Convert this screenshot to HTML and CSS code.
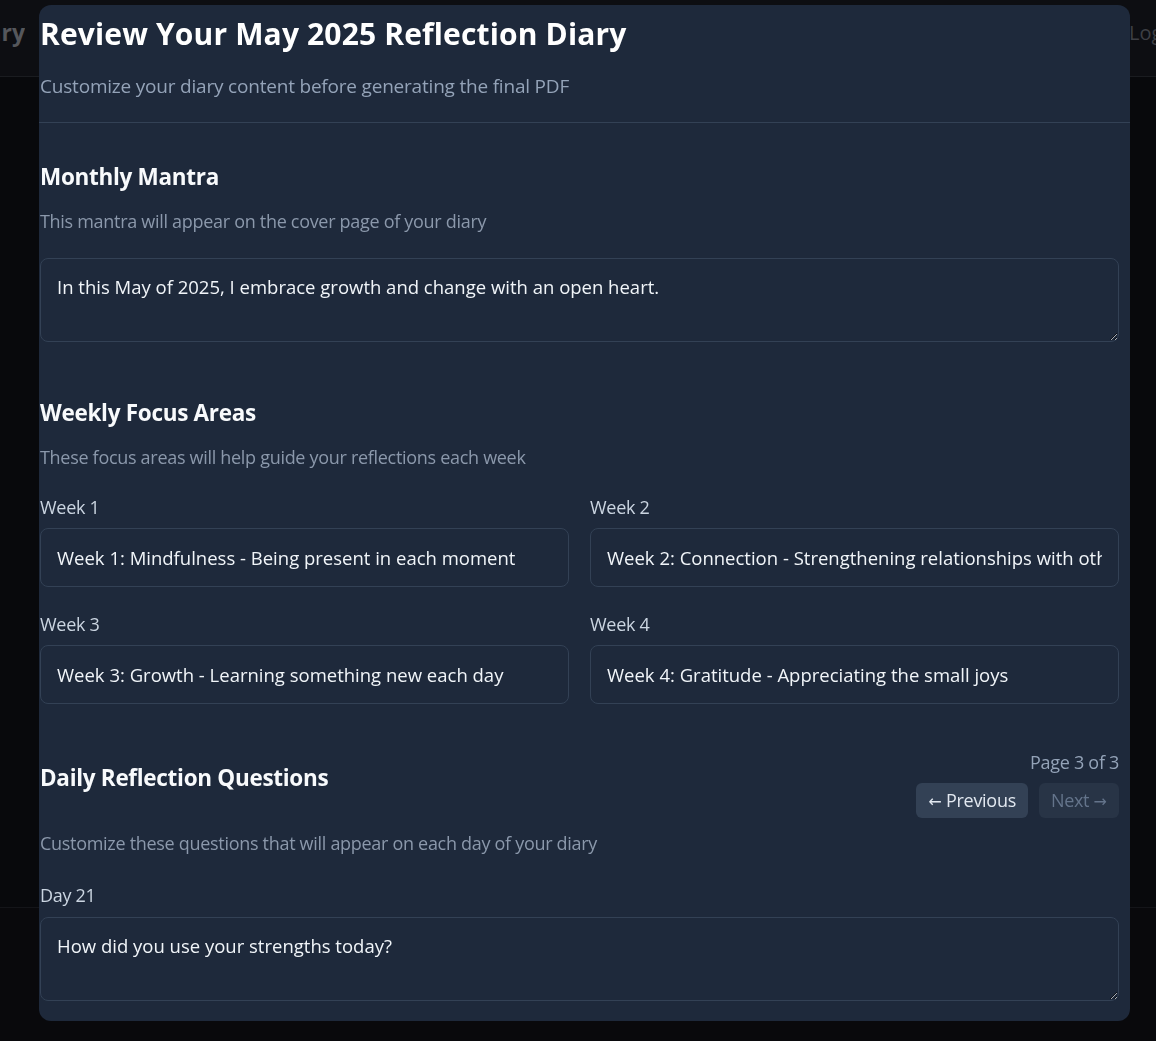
FILE: index.html
```html
<!DOCTYPE html>
<html lang="en">
<head>
<meta charset="utf-8">
<title>Review Your May 2025 Reflection Diary</title>
<link rel="stylesheet" href="styles.css">
</head>
<body>
<div class="page">
  <header class="topbar">
    <div class="brand"><span>Reflection Diary</span></div>
    <div class="logout">Logout</div>
  </header>
  <main class="main"></main>
  <footer class="footer"></footer>
</div>

<div class="overlay">
  <div class="modal">
    <div class="modal-head">
      <h1 class="title">Review Your May 2025 Reflection Diary</h1>
      <p class="subtitle">Customize your diary content before generating the final PDF</p>
    </div>
    <div class="modal-body">
      <section class="section">
        <h2 class="section-title">Monthly Mantra</h2>
        <p class="section-desc">This mantra will appear on the cover page of your diary</p>
        <textarea class="field area" rows="2">In this May of 2025, I embrace growth and change with an open heart.</textarea>
      </section>

      <section class="section section-weekly">
        <h2 class="section-title">Weekly Focus Areas</h2>
        <p class="section-desc">These focus areas will help guide your reflections each week</p>
        <div class="week-grid">
          <label class="item">
            <span class="label">Week 1</span>
            <input class="field line" type="text" value="Week 1: Mindfulness - Being present in each moment">
          </label>
          <label class="item">
            <span class="label">Week 2</span>
            <input class="field line" type="text" value="Week 2: Connection - Strengthening relationships with others">
          </label>
          <label class="item">
            <span class="label">Week 3</span>
            <input class="field line" type="text" value="Week 3: Growth - Learning something new each day">
          </label>
          <label class="item">
            <span class="label">Week 4</span>
            <input class="field line" type="text" value="Week 4: Gratitude - Appreciating the small joys">
          </label>
        </div>
      </section>

      <section class="section section-daily">
        <div class="daily-head">
          <h2 class="section-title daily-title">Daily Reflection Questions</h2>
          <div class="pager">
            <span class="page-info">Page 3 of 3</span>
            <div class="pager-buttons">
              <button class="btn btn-prev" type="button"><span class="arrow">←</span> Previous</button>
              <button class="btn btn-next" type="button" disabled>Next <span class="arrow">→</span></button>
            </div>
          </div>
        </div>
        <p class="section-desc daily-desc">Customize these questions that will appear on each day of your diary</p>
        <label class="item day-item">
          <span class="label">Day 21</span>
          <textarea class="field area" rows="2">How did you use your strengths today?</textarea>
        </label>
      </section>
    </div>
  </div>
</div>
</body>
</html>
```

FILE: styles.css
```css
* { box-sizing: border-box; }

html, body {
  margin: 0;
  padding: 0;
  height: 100%;
  overflow: hidden;
}

body {
  font-family: "Open Sans", "Noto Sans", "Liberation Sans", sans-serif;
  background: #08090c;
  color: #f1f5f9;
}

.page {
  display: flex;
  flex-direction: column;
  height: 100vh;
}

.topbar {
  height: 77px;
  flex: none;
  display: flex;
  align-items: center;
  background: #0d0e12;
  border-bottom: 1px solid #1a1c20;
  padding-bottom: 12px;
}

.brand {
  width: 25px;
  overflow: hidden;
  display: flex;
  justify-content: flex-end;
  white-space: nowrap;
  font-size: 23px;
  font-weight: 700;
  color: #55575c;
}

.logout {
  margin-left: auto;
  width: 27px;
  overflow: hidden;
  white-space: nowrap;
  font-size: 20px;
  color: #3d3f44;
}

.main {
  flex: none;
  height: 830px;
  background: #08090c;
}

.footer {
  flex: 1;
  background: #09090c;
  border-top: 1px solid #141519;
}

.overlay {
  position: fixed;
  inset: 0;
  padding: 5px 26px 20px 39px;
}

.modal {
  width: 1091px;
  height: 1016px;
  background: #1e293b;
  border-radius: 12px;
  overflow: hidden;
}

.modal-head {
  padding: 11px 11px 22px 1px;
  border-bottom: 1px solid #334155;
}

.title {
  margin: 0;
  font-size: 30px;
  line-height: 36px;
  font-weight: 700;
  color: #ffffff;
  letter-spacing: 0.15px;
}

.subtitle {
  margin: 20px 0 0;
  font-size: 19px;
  line-height: 28px;
  color: #94a3b8;
  letter-spacing: -0.2px;
}

.modal-body {
  padding: 38px 11px 20px 1px;
}

.section-title {
  margin: 0;
  font-size: 22.5px;
  line-height: 32px;
  font-weight: 700;
  color: #f8fafc;
  letter-spacing: -0.3px;
}

.section-desc {
  margin: 14px 0 0;
  font-size: 18px;
  line-height: 28px;
  color: #8b98ab;
  letter-spacing: -0.3px;
}

.field {
  display: block;
  width: 100%;
  background: #1e293b;
  border: 1px solid #334155;
  border-radius: 8px;
  color: #f1f5f9;
  font-family: inherit;
  font-size: 18.5px;
  letter-spacing: 0;
  padding: 16px;
  outline: none;
  color-scheme: dark;
}

.area {
  margin-top: 23px;
  height: 84px;
  line-height: 24px;
  resize: vertical;
}

.line {
  height: 59px;
  line-height: 24px;
  margin-top: 7px;
}

.section-weekly { margin-top: 55px; }

.week-grid {
  margin-top: 22px;
  display: grid;
  grid-template-columns: 1fr 1fr;
  column-gap: 21px;
  row-gap: 23px;
}

.item {
  display: flex;
  flex-direction: column;
}

.label {
  font-size: 18px;
  line-height: 28px;
  color: #cbd5e1;
  letter-spacing: -0.3px;
}

.section-daily { margin-top: 44px; }

.daily-head {
  display: flex;
  justify-content: space-between;
  align-items: flex-start;
}

.daily-title { margin-top: 14px; }

.pager {
  display: flex;
  flex-direction: column;
  align-items: flex-end;
}

.page-info {
  font-size: 18px;
  line-height: 28px;
  color: #94a3b8;
  letter-spacing: -0.3px;
}

.pager-buttons {
  margin-top: 7px;
  display: flex;
  gap: 11px;
}

.btn {
  font-family: inherit;
  font-size: 18px;
  line-height: 27px;
  height: 35px;
  padding: 4px 12px;
  border: none;
  border-radius: 6px;
  letter-spacing: -0.3px;
}

.arrow {
  font-family: "DejaVu Sans", sans-serif;
  font-size: 16px;
  letter-spacing: 0;
}

.btn-prev {
  background: #334155;
  color: #e2e8f0;
}

.btn-next {
  background: #283446;
  color: #64748b;
}

.daily-desc { margin-top: 11px; }

.day-item { margin-top: 24px; }

.day-item .area { margin-top: 8px; }
```
